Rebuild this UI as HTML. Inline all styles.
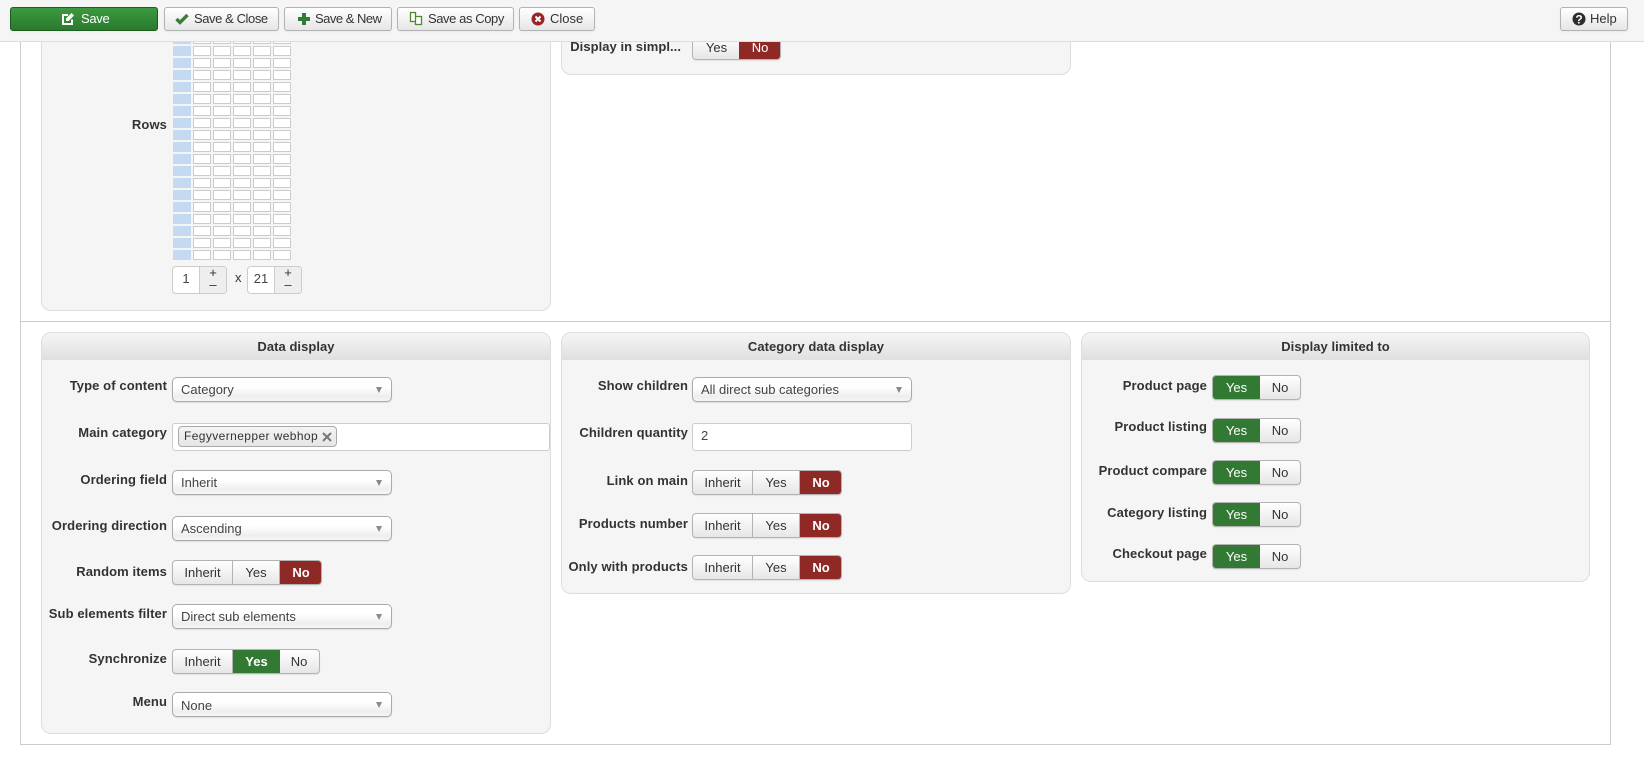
<!DOCTYPE html>
<html><head><meta charset="utf-8"><title>Module</title>
<style>
html,body{margin:0;padding:0;background:#fff}
body{width:1644px;height:780px;overflow:hidden;position:relative;font-family:"Liberation Sans",Arial,sans-serif;font-size:13px;color:#333}
div,span,svg{position:absolute;box-sizing:border-box}
.tb{left:0;top:0;width:1644px;height:42px;background:#f5f5f5;border-bottom:1px solid #ddd;z-index:5}
.b{top:7px;height:24px;border:1px solid #b3b3b3;border-radius:3px;background:linear-gradient(#fff,#e6e6e6);line-height:22px;color:#333;box-shadow:0 1px 2px rgba(0,0,0,.05)}
.b span{top:0;white-space:nowrap}
.b svg{top:4px}
.p{background:#f5f5f5;border:1px solid #ddd;border-radius:10px}
.h{left:0;top:0;right:0;height:27px;background:linear-gradient(#f5f5f5,#e0e0e0);border-radius:9px 9px 0 0;text-align:center;font-weight:bold;line-height:27px;color:#333;letter-spacing:.05px}
.l{height:18px;line-height:18px;font-weight:bold;text-align:right;white-space:nowrap;color:#333;letter-spacing:.1px}
.l1{left:20px;width:147px}.l2{left:540px;width:148px}.l3{left:1060px;width:147px}
.s{height:25px;border:1px solid #aaa;border-radius:5px;background:linear-gradient(#fff 0,#fff 40%,#eee 80%,#f5f5f5);box-shadow:0 1px 1px rgba(0,0,0,.1);line-height:23px;color:#444;padding-left:8px;white-space:nowrap}
.s i{position:absolute;right:9px;top:9px;width:0;height:0;border-left:3.5px solid transparent;border-right:3.5px solid transparent;border-top:6px solid #888}
.w{left:172px;width:220px}.m{left:692px;width:220px}
.t{height:25px;border:1px solid #b3b3b3;border-radius:4px;background:linear-gradient(#fff,#e6e6e6);box-shadow:0 1px 1px rgba(0,0,0,.08);overflow:hidden}
.t span{top:-1px;height:25px;line-height:25px;text-align:center;color:#333;border-right:1px solid #b3b3b3}
.t span:last-child{border-right:0}
.t .n{background:#8f2926;color:#fff;font-weight:bold;border-right:0}
.t .g{background:#327a34;color:#fff;border-right:0}
.t .gb{font-weight:bold}
.i{background:#fff;border:1px solid #ccc;border-radius:3px;height:28px}
.st{top:266px;width:55px;height:28px;border:1px solid #ccc;border-radius:4px;background:#fff;overflow:hidden}
.st u{position:absolute;left:0;top:-1px;width:26px;height:26px;line-height:26px;text-align:center;text-decoration:none;color:#444;font-size:13px}
.st b{position:absolute;left:26px;top:0;width:27px;height:26px;background:#eee;border-left:1px solid #ccc;font-weight:normal;text-align:center;color:#333}
.st em{position:absolute;left:0;width:26px;text-align:center;font-style:normal;font-size:13px;line-height:14px}
</style></head>
<body>
<div class="p" style="left:41px;top:-20px;width:510px;height:331px"></div>
<div class="p" style="left:561px;top:-20px;width:510px;height:95px"></div>
<div style="left:20px;top:-10px;width:1591px;height:755px;border:1px solid #ccc;border-top:0;background:transparent"></div>
<div style="left:20px;top:321px;width:1591px;height:1px;background:#ccc"></div>

<svg style="left:173px;top:34px" width="118" height="226"><defs><pattern id="c" x="0" y="0" width="20" height="12" patternUnits="userSpaceOnUse"><rect x="0.5" y="0.5" width="17" height="9" fill="#fff" stroke="#ccc"/></pattern></defs><rect x="20" y="0" width="98" height="226" fill="url(#c)"/><g fill="#c5daf1"><rect y="0" width="18" height="10"/><rect y="12" width="18" height="10"/><rect y="24" width="18" height="10"/><rect y="36" width="18" height="10"/><rect y="48" width="18" height="10"/><rect y="60" width="18" height="10"/><rect y="72" width="18" height="10"/><rect y="84" width="18" height="10"/><rect y="96" width="18" height="10"/><rect y="108" width="18" height="10"/><rect y="120" width="18" height="10"/><rect y="132" width="18" height="10"/><rect y="144" width="18" height="10"/><rect y="156" width="18" height="10"/><rect y="168" width="18" height="10"/><rect y="180" width="18" height="10"/><rect y="192" width="18" height="10"/><rect y="204" width="18" height="10"/><rect y="216" width="18" height="10"/></g></svg>
<div class="l l1" style="top:116px">Rows</div>
<div class="st" style="left:172px"><u>1</u><b><em style="top:-1px">+</em><em style="top:11px">–</em></b></div>
<div style="left:235px;top:269px;line-height:18px;color:#333">x</div>
<div class="st" style="left:247px"><u>21</u><b><em style="top:-1px">+</em><em style="top:11px">–</em></b></div>

<div class="l" style="left:540px;width:141px;top:38px;letter-spacing:.05px">Display in simpl...</div>
<div class="t" style="left:692px;top:35px;width:89px"><span style="left:0;width:47px;padding-left:1px">Yes</span><span class="n" style="left:46px;width:42px;font-weight:normal">No</span></div>

<div class="p" style="left:41px;top:332px;width:510px;height:402px"><div class="h">Data display</div></div>
<div class="p" style="left:561px;top:332px;width:510px;height:262px"><div class="h">Category data display</div></div>
<div class="p" style="left:1081px;top:332px;width:509px;height:250px"><div class="h">Display limited to</div></div>

<div class="l l1" style="top:377px">Type of content</div>
<div class="s w" style="top:377px">Category<i></i></div>
<div class="l l1" style="top:424px">Main category</div>
<div class="i" style="left:172px;top:423px;width:378px"></div>
<div style="left:178px;top:426px;width:159px;height:21px;border:1px solid #aaa;border-radius:4px;background:linear-gradient(#f4f4f4,#e6e6e6);line-height:18px;padding-left:5px;font-size:12px;letter-spacing:.4px;white-space:nowrap;color:#333">Fegyvernepper webhop<svg style="left:143px;top:5px" width="10" height="10" viewBox="0 0 10 10"><path d="M1 1L9 9M9 1L1 9" stroke="#777" stroke-width="2"/></svg></div>
<div class="l l1" style="top:471px">Ordering field</div>
<div class="s w" style="top:470px">Inherit<i></i></div>
<div class="l l1" style="top:517px">Ordering direction</div>
<div class="s w" style="top:516px">Ascending<i></i></div>
<div class="l l1" style="top:563px">Random items</div>
<div class="t" style="left:172px;top:560px;width:150px"><span style="left:0;width:60px">Inherit</span><span style="left:60px;width:47px">Yes</span><span class="n" style="left:107px;width:42px">No</span></div>
<div class="l l1" style="top:605px">Sub elements filter</div>
<div class="s w" style="top:604px">Direct sub elements<i></i></div>
<div class="l l1" style="top:650px">Synchronize</div>
<div class="t" style="left:172px;top:649px;width:148px"><span style="left:0;width:60px">Inherit</span><span class="g gb" style="left:60px;width:47px">Yes</span><span style="left:106px;width:40px">No</span></div>
<div class="l l1" style="top:693px">Menu</div>
<div class="s w" style="top:692px;line-height:25px">None<i></i></div>

<div class="l l2" style="top:377px">Show children</div>
<div class="s m" style="top:377px">All direct sub categories<i></i></div>
<div class="l l2" style="top:424px">Children quantity</div>
<div class="i" style="left:692px;top:423px;width:220px;line-height:24px;padding-left:8px;color:#444">2</div>
<div class="l l2" style="top:472px">Link on main</div>
<div class="t" style="left:692px;top:470px;width:150px"><span style="left:0;width:60px">Inherit</span><span style="left:60px;width:47px">Yes</span><span class="n" style="left:107px;width:42px">No</span></div>
<div class="l l2" style="top:515px">Products number</div>
<div class="t" style="left:692px;top:513px;width:150px"><span style="left:0;width:60px">Inherit</span><span style="left:60px;width:47px">Yes</span><span class="n" style="left:107px;width:42px">No</span></div>
<div class="l l2" style="top:558px">Only with products</div>
<div class="t" style="left:692px;top:555px;width:150px"><span style="left:0;width:60px">Inherit</span><span style="left:60px;width:47px">Yes</span><span class="n" style="left:107px;width:42px">No</span></div>

<div class="l l3" style="top:377px">Product page</div>
<div class="t" style="left:1212px;top:375px;width:89px"><span class="g" style="left:0;width:47px">Yes</span><span style="left:47px;width:40px">No</span></div>
<div class="l l3" style="top:418px">Product listing</div>
<div class="t" style="left:1212px;top:418px;width:89px"><span class="g" style="left:0;width:47px">Yes</span><span style="left:47px;width:40px">No</span></div>
<div class="l l3" style="top:462px">Product compare</div>
<div class="t" style="left:1212px;top:460px;width:89px"><span class="g" style="left:0;width:47px">Yes</span><span style="left:47px;width:40px">No</span></div>
<div class="l l3" style="top:504px">Category listing</div>
<div class="t" style="left:1212px;top:502px;width:89px"><span class="g" style="left:0;width:47px">Yes</span><span style="left:47px;width:40px">No</span></div>
<div class="l l3" style="top:545px">Checkout page</div>
<div class="t" style="left:1212px;top:544px;width:89px"><span class="g" style="left:0;width:47px">Yes</span><span style="left:47px;width:40px">No</span></div>

<div class="tb">
<div class="b" style="left:10px;width:148px;background:linear-gradient(#3c9a3f,#2a7a2d);border-color:#1e5e20;color:#fff"><svg style="left:50px" width="14" height="14" viewBox="0 0 14 14"><path d="M11 7.500V12H2V3h5" fill="none" stroke="#fff" stroke-width="2"/><path d="M5 6.500L10.500 1l2.500 2.500L7.500 9H5z" fill="#fff"/></svg><span style="left:70px;letter-spacing:-.3px">Save</span></div>
<div class="b" style="left:164px;width:115px"><svg style="left:10px" width="14" height="14" viewBox="0 0 14 14"><path d="M1.500 7L5 10.500L12.500 3" fill="none" stroke="#3b7d3b" stroke-width="3.400"/></svg><span style="left:29px;letter-spacing:-.42px">Save &amp; Close</span></div>
<div class="b" style="left:284px;width:108px"><svg style="left:12px" width="14" height="14" viewBox="0 0 14 14"><path d="M7 1v12M1 7h12" stroke="#2f7d32" stroke-width="4"/></svg><span style="left:30px;letter-spacing:-.5px">Save &amp; New</span></div>
<div class="b" style="left:397px;width:117px"><svg style="left:11px;top:3px" width="14" height="15" viewBox="0 0 14 15"><path d="M1.500 1.500h5v9h-5zM6.500 5.500h6v8h-6V10.500" fill="#fff" stroke="#4a8a2a" stroke-width="1.300"/></svg><span style="left:30px;letter-spacing:-.42px">Save as Copy</span></div>
<div class="b" style="left:519px;width:76px"><svg style="left:11px" width="14" height="14" viewBox="0 0 14 14"><circle cx="7" cy="7" r="6.500" fill="#972525"/><path d="M4.500 4.500l5 5M9.500 4.500l-5 5" stroke="#fff" stroke-width="2"/></svg><span style="left:30px">Close</span></div>
<div class="b" style="left:1560px;width:68px"><svg style="left:11px" width="14" height="14" viewBox="0 0 14 14"><circle cx="7" cy="7" r="6.500" fill="#2d2d2d"/><text x="7" y="11.500" font-size="12" font-weight="bold" text-anchor="middle" fill="#fff" font-family="Liberation Sans">?</text></svg><span style="left:29px">Help</span></div>
</div>
</body></html>
